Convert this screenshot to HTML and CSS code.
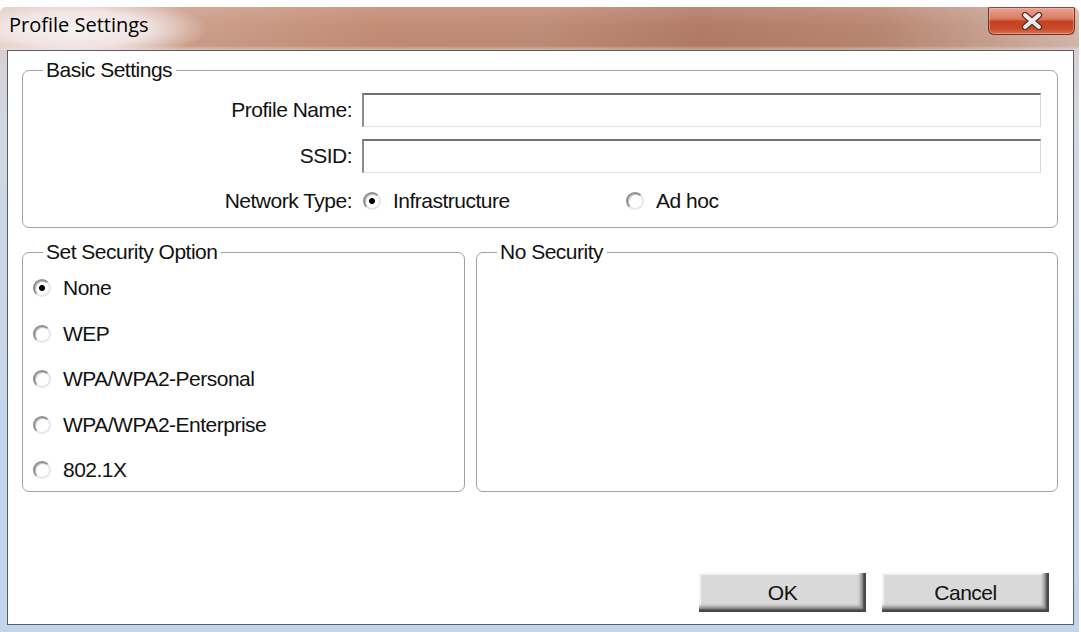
FILE: index.html
```html
<!DOCTYPE html>
<html>
<head>
<meta charset="utf-8">
<link rel="stylesheet" href="styles.css">
</head>
<body>
<div class="window">
  <div class="titlebar">
    <span class="title">Profile Settings</span>
    <button class="close" aria-label="Close">
      <svg width="22" height="18" viewBox="0 0 22 18">
        <path d="M4 3 L18 15 M18 3 L4 15" stroke="#5b2c22" stroke-width="6.4" stroke-linecap="round" fill="none"/>
        <path d="M4 3 L18 15 M18 3 L4 15" stroke="#ececec" stroke-width="4" stroke-linecap="round" fill="none"/>
      </svg>
    </button>
  </div>
  <div class="client">
    <fieldset class="group basic">
      <legend>Basic Settings</legend>
      <div class="form">
        <span class="lbl">Profile Name:</span><div class="input"></div>
        <span class="lbl">SSID:</span><div class="input"></div>
        <span class="lbl net">Network Type:</span>
        <div class="radios net">
          <span class="opt first"><span class="radio checked"></span>Infrastructure</span>
          <span class="opt"><span class="radio"></span>Ad hoc</span>
        </div>
      </div>
    </fieldset>
    <div class="row">
      <fieldset class="group security">
        <legend>Set Security Option</legend>
        <div class="list">
          <span class="opt"><span class="radio checked"></span>None</span>
          <span class="opt"><span class="radio"></span>WEP</span>
          <span class="opt"><span class="radio"></span>WPA/WPA2-Personal</span>
          <span class="opt"><span class="radio"></span>WPA/WPA2-Enterprise</span>
          <span class="opt"><span class="radio"></span>802.1X</span>
        </div>
      </fieldset>
      <fieldset class="group nosec">
        <legend>No Security</legend>
      </fieldset>
    </div>
    <div class="buttons">
      <button class="btn">OK</button>
      <button class="btn">Cancel</button>
    </div>
  </div>
</div>
</body>
</html>
```

FILE: styles.css
```css
html, body {
  margin: 0;
  padding: 0;
  background: #ffffff;
}
body {
  width: 1081px;
  height: 632px;
  overflow: hidden;
  font-family: "Liberation Sans", Arial, sans-serif;
  font-size: 21px;
  letter-spacing: -0.5px;
  color: #111;
}
.window {
  margin-top: 7px;
  width: 1079px;
  height: 625px;
  box-sizing: border-box;
  background: linear-gradient(to bottom, #dccac6 0px, #d2d8e4 120px, #c6d6ea 400px, #c4d5ea 625px);
  border-radius: 7px 7px 0 0;
  display: flex;
  flex-direction: column;
}
.titlebar {
  height: 43px;
  flex: 0 0 43px;
  box-sizing: border-box;
  display: flex;
  justify-content: space-between;
  align-items: flex-start;
  padding: 0 4px 0 9px;
  border-radius: 7px 7px 0 0;
  background:
    radial-gradient(ellipse 130px 32px at 78px 22px, rgba(248,244,246,0.97) 0%, rgba(246,236,236,0.85) 55%, rgba(240,225,220,0) 100%),
    linear-gradient(to bottom, rgba(255,255,255,0.12) 0%, rgba(255,255,255,0) 45%, rgba(0,0,0,0.02) 90%, rgba(255,255,255,0.35) 100%),
    linear-gradient(to right, #dcc3ba 0px, #cd9f8b 190px, #c38c75 380px, #bf8c77 540px, #b27b65 700px, #b98671 880px, #c7a190 990px, #d4b8ad 1079px);
}
.title {
  font-family: "Open Sans", "Noto Sans", sans-serif;
  font-size: 20px;
  line-height: 27px;
  padding-top: 4px;
  color: #000;
  letter-spacing: 0;
}
.close {
  width: 87px;
  height: 28px;
  margin: 0;
  padding: 0;
  box-sizing: border-box;
  border: 1px solid #6e3428;
  border-top-color: #8a4a3c;
  border-radius: 2px 2px 6px 6px;
  background: linear-gradient(to bottom, #e7a394 0%, #d97a63 42%, #c6401f 52%, #c84a2c 80%, #dc7350 100%);
  box-shadow: inset 0 0 0 1px rgba(255,200,180,0.45);
  display: flex;
  align-items: center;
  justify-content: center;
}
.close svg {
  display: block;
  margin-top: -1px;
}
.client {
  flex: 0 0 575px;
  height: 575px;
  box-sizing: border-box;
  margin: 0 5px 0 7px;
  border: 1px solid #555d68;
  background: #ffffff;
  display: flex;
  flex-direction: column;
  padding: 7px 15px 12px 14px;
}
.group {
  margin: 0;
  padding: 0;
  min-width: 0;
  border: 1px solid #a0a0a0;
  border-radius: 7px;
}
.group legend {
  margin-left: 20px;
  padding: 0 4px 0 3px;
  line-height: 24px;
  color: #111;
}
.form {
  display: grid;
  grid-template-columns: 329px 679px;
  column-gap: 10px;
  row-gap: 12px;
  grid-template-rows: 34px 34px 24px;
  padding: 11px 16px 18px 0;
  align-items: center;
}
.lbl {
  text-align: right;
  line-height: 24px;
}
.net {
  margin-top: 7px;
}
.input {
  height: 34px;
  box-sizing: border-box;
  border-top: 2px solid #727272;
  border-left: 2px solid #8c8c8c;
  border-right: 1px solid #d6d6d6;
  border-bottom: 1px solid #e2e2e2;
  background: #fff;
}
.radios {
  display: flex;
  align-items: center;
  padding-left: 1px;
}
.opt {
  display: flex;
  align-items: center;
  line-height: 24px;
  white-space: nowrap;
}
.opt.first {
  width: 263px;
}
.radio {
  width: 18px;
  height: 18px;
  box-sizing: border-box;
  border-radius: 50%;
  border: 2px solid;
  border-color: #8e8e8e #e6e6e6 #e6e6e6 #8e8e8e;
  background: #ffffff;
  margin-right: 12px;
  flex: 0 0 18px;
  box-shadow: inset 1px 1px 0 #c4c4c4;
}
.radio.checked {
  background: radial-gradient(circle, #000 0, #000 2.6px, #ffffff 3.4px);
}
.row {
  display: flex;
  gap: 11px;
  margin-top: 12px;
}
.security {
  flex: 0 0 443px;
  box-sizing: border-box;
}
.nosec {
  flex: 1 1 auto;
}
.list {
  display: flex;
  flex-direction: column;
  gap: 21.5px;
  padding: 12px 0 9px 10px;
}
.buttons {
  margin-top: auto;
  display: flex;
  justify-content: flex-end;
  gap: 16px;
  padding-right: 9px;
}
.btn {
  width: 167px;
  height: 39px;
  margin: 0;
  padding: 0;
  border: none;
  background: #d9d9d9;
  font-family: "Liberation Sans", Arial, sans-serif;
  font-size: 21px;
  letter-spacing: -0.5px;
  color: #111;
  box-shadow:
    inset -3px -3px 2px #474747,
    inset -6px -6px 3px #9a9a9a,
    inset 2px 2px 1px #f3f3f3;
}
```
